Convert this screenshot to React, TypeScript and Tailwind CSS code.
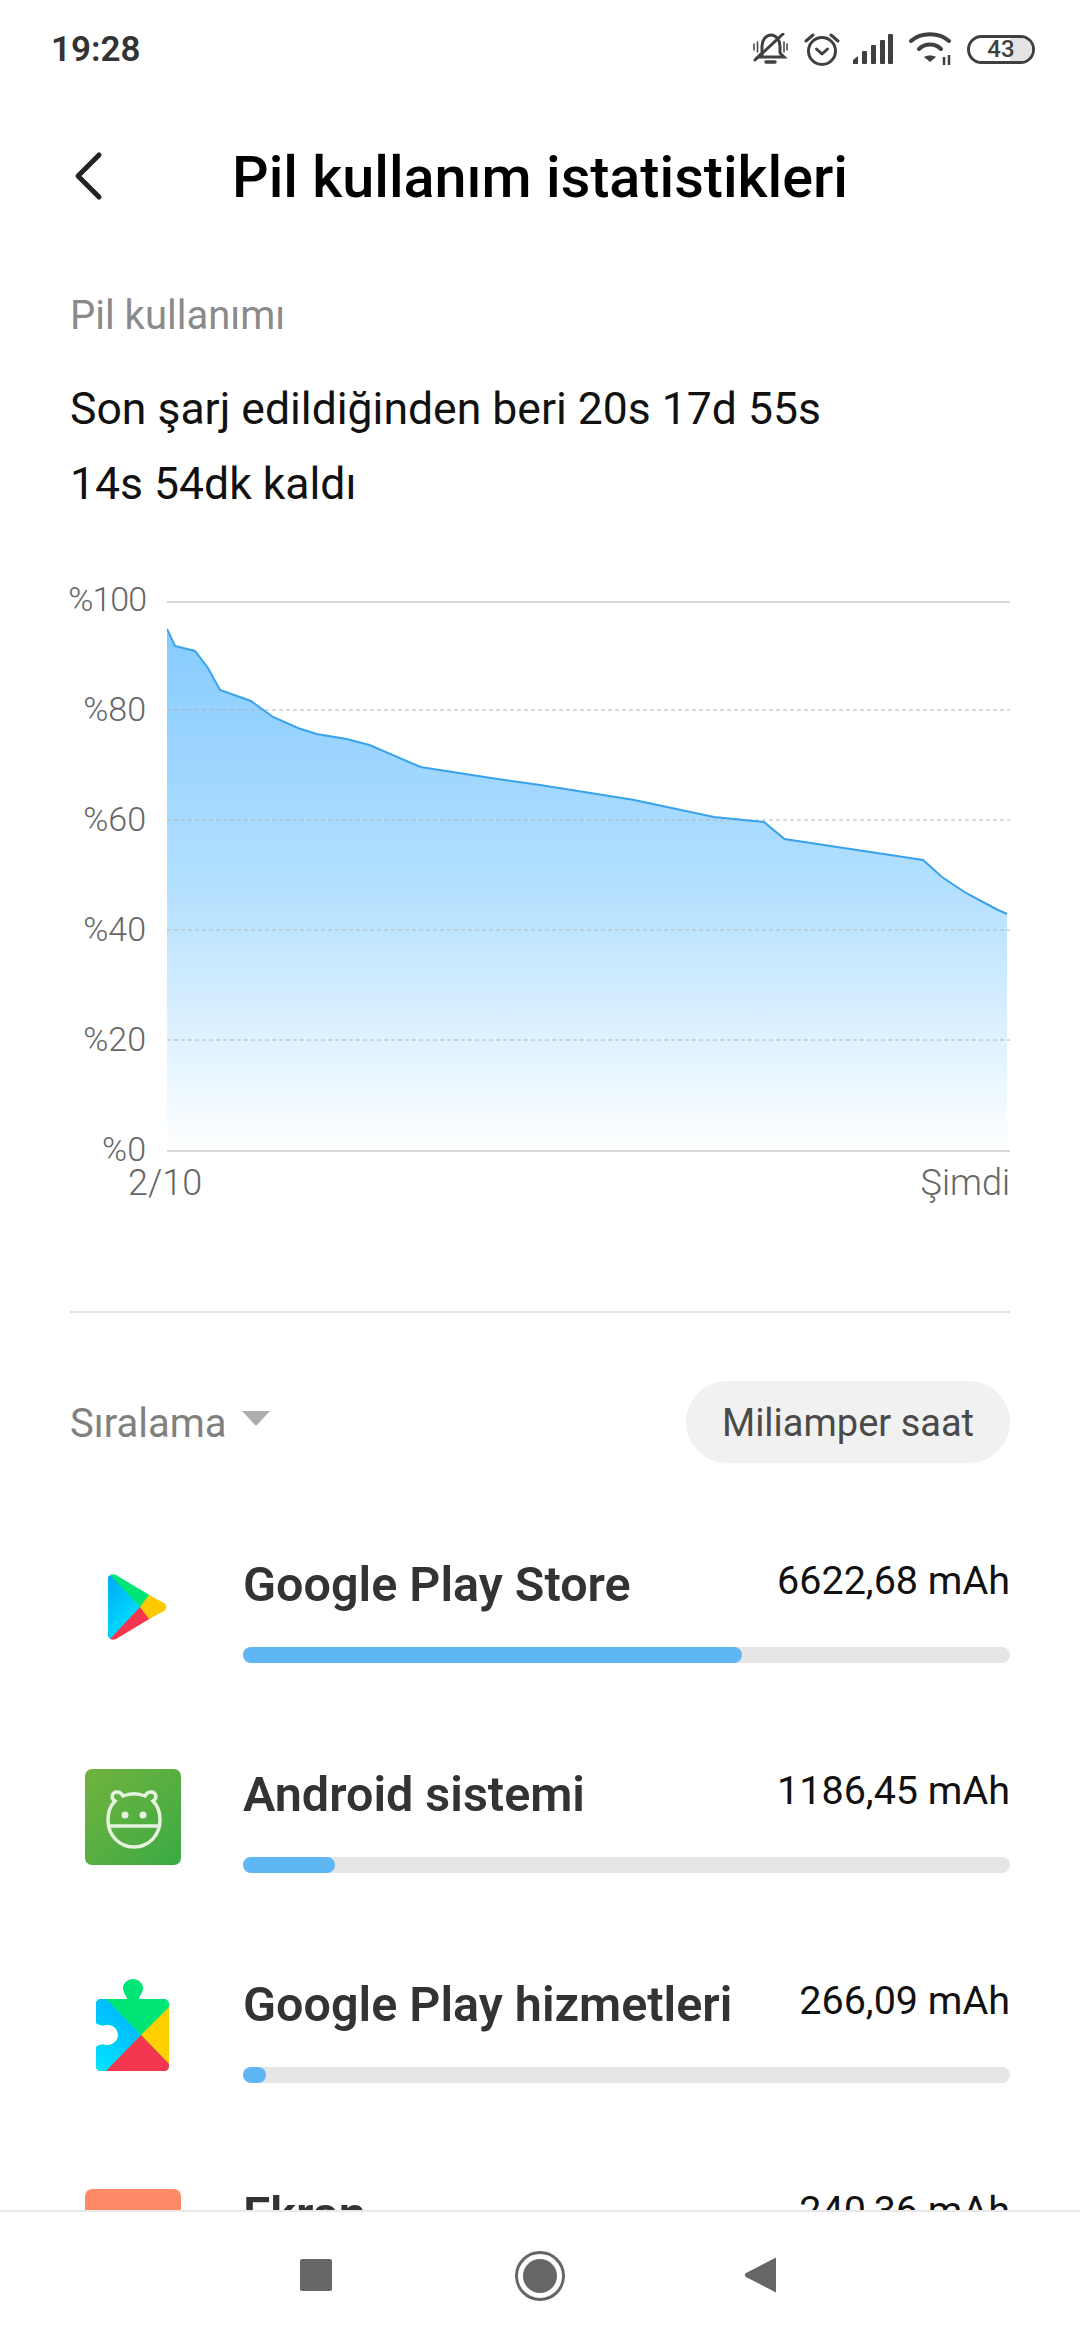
const pts: [number, number][] = [
  [0, 28], [8, 45], [28, 50], [41, 67], [53, 89], [84, 100], [106, 116], [131, 127], [149.5, 133], [179.5, 138], [202.5, 144],
  [253.5, 166], [324, 177], [373, 184], [466, 198.7], [547, 216], [597, 221], [617.5, 238], [756, 259], [775, 276], [799, 292], [829, 308], [840, 313],
];
const line = pts.map((p) => p.join(",")).join(" ");

function Bell() {
  return (
    <svg width="36" height="32" viewBox="0 0 36 32" fill="none" stroke="#404040" strokeWidth="3" strokeLinecap="round">
      <path d="M9 22 V13 C9 7 13 2 18 2 C23 2 27 7 27 13 V20 L31 24 H5 L8 21" />
      <path d="M13 29 H22" strokeWidth="3.5" />
      <path d="M2 27 L30 1" />
      <path d="M1 11 V17 M34 11 V17 M4.500 9 V19 M31 9 V19" strokeWidth="1.500" />
    </svg>
  );
}
function Alarm() {
  return (
    <svg width="36" height="33" viewBox="0 0 36 33" fill="none" stroke="#404040" strokeWidth="3" strokeLinecap="round" strokeLinejoin="round">
      <circle cx="18" cy="18" r="13.500" />
      <path d="M12.500 16 L18 21 L23.500 16" />
      <path d="M2 8 L9 2 M34 8 L27 2" />
    </svg>
  );
}
function Signal() {
  return (
    <svg width="40" height="30" viewBox="0 0 40 30" fill="#404040">
      <path d="M0 30 V26 L5 22 V30 Z" />
      <rect x="9" y="17" width="5" height="13" rx="1" />
      <rect x="18" y="11" width="5" height="19" rx="1" />
      <rect x="27" y="6" width="5" height="24" rx="1" />
      <rect x="35" y="0" width="5" height="30" rx="1" />
    </svg>
  );
}
function Wifi() {
  return (
    <svg width="44" height="34" viewBox="0 0 44 34" fill="none" stroke="#404040" strokeWidth="4" strokeLinecap="round">
      <path d="M2 9 C12 0 30 0 40 9" />
      <path d="M10 17 C16 11 26 11 32 17" />
      <path d="M21 30 L15 25 C18 23 24 23 27 25 Z" fill="#404040" stroke="none" />
      <path d="M35 25 V33 M40 23 V33" strokeWidth="2.500" strokeLinecap="butt" />
    </svg>
  );
}
function Battery() {
  return (
    <div className="relative flex h-[29px] w-[68px] items-center justify-center overflow-hidden rounded-full border-[3px] border-[#404040]">
      <div className="absolute right-0 top-0 h-full w-[22px] bg-[#e3e3e3]" />
      <span className="relative text-[24px] font-medium leading-none text-[#404040]">43</span>
    </div>
  );
}
function PlayIcon() {
  return (
    <svg width="96" height="96" viewBox="0 0 96 96">
      <defs>
        <linearGradient id="pb" x1="0" y1="0" x2="0.6" y2="1">
          <stop offset="0" stopColor="#00a8f5" />
          <stop offset="1" stopColor="#00e6ff" />
        </linearGradient>
      </defs>
      <path d="M23 19 C23 17 25 16 27 16 L58 48 L27 80 C25 80 23 79 23 77 Z" fill="url(#pb)" />
      <path d="M25 16 C27 15 29 15 31 16 L66 37 L55 48 Z" fill="#00e578" />
      <path d="M25 80 C27 81 29 81 31 80 L66 59 L55 48 Z" fill="#f5344e" />
      <path d="M64 36 L79 44 C82 46 82 50 79 52 L64 60 L55 48 Z" fill="#ffc900" />
    </svg>
  );
}
function AndroidIcon() {
  return (
    <div className="flex h-[96px] w-[96px] items-center justify-center rounded-[7px] bg-gradient-to-br from-[#70b33f] to-[#37aa44]">
      <svg width="96" height="96" viewBox="0 0 96 96" fill="none" stroke="#e6f3df" strokeWidth="3.500">
        <path d="M30 32 C25 29 27 23 32 23 C35 23 37 25 38 27 C45 24 53 24 60 27 C61 25 63 23 66 23 C71 23 73 29 68 32 C73 37 75 43 75 51 C75 66 64 78 49 78 C34 78 23 66 23 51 C23 43 25 37 30 32 Z" />
        <path d="M23 57 H75" />
        <circle cx="40" cy="46" r="3.500" fill="#e6f3df" stroke="none" />
        <circle cx="58" cy="46" r="3.500" fill="#e6f3df" stroke="none" />
      </svg>
    </div>
  );
}
function ServicesIcon() {
  return (
    <svg width="96" height="96" viewBox="0 0 96 96">
      <defs>
        <clipPath id="pz">
          <path d="M16 20 H42 C42 17 38 14 38 9 C38 4 43 0 48 0 C53 0 58 4 58 9 C58 14 54 17 54 20 H79 C82 20 84 22 84 25 V87 C84 90 82 92 79 92 H16 C13 92 11 90 11 87 V68 C14 66 17 65 20 66 C28 67 33 62 33 56 C33 50 28 45 20 46 C17 47 14 46 11 44 V25 C11 22 13 20 16 20 Z" />
        </clipPath>
        <linearGradient id="sb" x1="0.2" y1="1" x2="0.8" y2="0">
          <stop offset="0" stopColor="#00e5ff" />
          <stop offset="1" stopColor="#00b0ff" />
        </linearGradient>
      </defs>
      <g clipPath="url(#pz)">
        <rect x="0" y="0" width="96" height="96" fill="#00e676" />
        <path d="M21 20 L56 56 L21 92 H0 V20 Z" fill="url(#sb)" />
        <path d="M84 28 L56 56 L84 85 Z" fill="#ffd000" />
        <path d="M21 92 L56 56 L84 85 V92 Z" fill="#f5364f" />
      </g>
    </svg>
  );
}

const rows = [
  { name: "Google Play Store", value: "6622,68 mAh", w: "w-[499px]", icon: <PlayIcon /> },
  { name: "Android sistemi", value: "1186,45 mAh", w: "w-[92px]", icon: <AndroidIcon /> },
  { name: "Google Play hizmetleri", value: "266,09 mAh", w: "w-[23px]", icon: <ServicesIcon /> },
  { name: "Ekran", value: "240,36 mAh", w: "w-[20px]", icon: <div className="h-[96px] w-[96px] rounded-[7px] bg-[#ff8a68]" /> },
];

const grid = [109, 219, 329, 439];

export default function App() {
  return (
    <div className="flex h-[2340px] w-[1080px] flex-col overflow-hidden bg-white font-['Roboto',sans-serif]">
      <main className="min-h-0 flex-1 overflow-hidden">
        <div className="flex h-[98px] items-center justify-between pl-[51px] pr-[45px]">
          <span className="text-[35px] font-semibold leading-none text-[#333]">19:28</span>
          <div className="flex items-center">
            <Bell />
            <div className="ml-[15px]"><Alarm /></div>
            <div className="ml-[13px]"><Signal /></div>
            <div className="ml-[16px]"><Wifi /></div>
            <div className="ml-[14px]"><Battery /></div>
          </div>
        </div>
        <header className="relative flex h-[160px] items-center justify-center">
          <svg className="absolute left-[72px] top-[53px]" width="32" height="50" viewBox="0 0 32 50" fill="none" stroke="#222" strokeWidth="5" strokeLinecap="round" strokeLinejoin="round">
            <path d="M27 4 L6 25 L27 46" />
          </svg>
          <h1 className="text-[57.500px] font-medium leading-none text-black">Pil kullanım istatistikleri</h1>
        </header>
        <div className="px-[70px]">
          <p className="mt-[38px] text-[40px] leading-[40px] text-[#8a8a8a]">Pil kullanımı</p>
          <p className="mt-[36px] text-[44.500px] leading-[75px] text-[#111]">
            Son şarj edildiğinden beri 20s 17d 55s
            <br />
            14s 54dk kaldı
          </p>
        </div>
        <div className="mt-[57px] flex">
          <div className="w-[146px] shrink-0 text-right text-[34px] font-light leading-[40px] text-[#666]">
            <div className="h-[110px] tracking-[-1px]">%100</div>
            <div className="h-[110px]">%80</div>
            <div className="h-[110px]">%60</div>
            <div className="h-[110px]">%40</div>
            <div className="h-[110px]">%20</div>
            <div className="h-[40px]">%0</div>
          </div>
          <svg className="ml-[21px] mt-[22px]" width="843" height="552" viewBox="0 0 843 552">
            <defs>
              <linearGradient id="area" x1="0" y1="0" x2="0" y2="1">
                <stop offset="0" stopColor="#86cbff" />
                <stop offset="0.5" stopColor="#b4e0ff" />
                <stop offset="1" stopColor="#ffffff" />
              </linearGradient>
            </defs>
            <path d={`M0 550 L${line.replace(/ /g, " L")} V550 Z`} fill="url(#area)" />
            {grid.map((y) => (
              <line key={y} x1="0" x2="843" y1={y} y2={y} stroke="#b4b4b4" strokeWidth="1" strokeDasharray="4 3" />
            ))}
            <line x1="0" x2="843" y1="1" y2="1" stroke="#d9d9d9" strokeWidth="2" />
            <line x1="0" x2="843" y1="550" y2="550" stroke="#d9d9d9" strokeWidth="2" />
            <polyline points={line} fill="none" stroke="#38a3ea" strokeWidth="2" />
          </svg>
        </div>
        <div className="ml-[128px] mr-[70px] flex h-[28px] items-center justify-between text-[36px] font-light leading-[28px] text-[#666]">
          <span>2/10</span>
          <span>Şimdi</span>
        </div>
        <div className="mx-[70px] mt-[114px] h-[2px] bg-[#e3e3e3]" />
        <div className="mx-[70px] mt-[68px] flex h-[82px] items-center justify-between">
          <div className="flex items-center pt-[3px]">
            <span className="text-[40px] leading-none text-[#808080]">Sıralama</span>
            <span className="mb-[11px] ml-[15px] h-0 w-0 border-x-[14px] border-t-[15px] border-x-transparent border-t-[#adadad]" />
          </div>
          <div className="flex h-[82px] w-[324px] items-center justify-center rounded-full bg-[#f1f1f1] pt-[2px] text-[38px] leading-none text-[#4a4a4a]">
            Miliamper saat
          </div>
        </div>
        <div className="mt-[39px]">
          {rows.map((r) => (
            <div key={r.name} className="flex h-[210px] items-center pl-[85px] pr-[70px]">
              <div className="mr-[62px] shrink-0">{r.icon}</div>
              <div className="h-[210px] flex-1 pt-[53px]">
                <div className="flex h-[60px] items-center justify-between">
                  <span className="text-[48.500px] font-semibold leading-none text-[#333]">{r.name}</span>
                  <span className="mb-[8px] text-[39.500px] leading-none text-[#111]">{r.value}</span>
                </div>
                <div className="mt-[32px] h-[16px] rounded-full bg-[#e6e6e6]">
                  <div className={`h-full rounded-full bg-[#5fb6f5] ${r.w}`} />
                </div>
              </div>
            </div>
          ))}
        </div>
      </main>
      <nav className="flex h-[130px] shrink-0 items-start border-t-2 border-[#e8e8e8] bg-white">
        <div className="ml-[300px] mt-[47px] h-[32px] w-[32px] rounded-[2px] bg-[#666]" />
        <svg className="ml-[183px] mt-[39px]" width="50" height="50" viewBox="0 0 50 50">
          <circle cx="25" cy="25" r="23.500" fill="none" stroke="#666" strokeWidth="3" />
          <circle cx="25" cy="25" r="17" fill="#666" />
        </svg>
        <svg className="ml-[180px] mt-[45px]" width="32" height="36" viewBox="0 0 32 36">
          <path d="M31 0.500 V35.500 L1 20 C-0.500 19 -0.500 17 1 16 Z" fill="#666" />
        </svg>
      </nav>
    </div>
  );
}
